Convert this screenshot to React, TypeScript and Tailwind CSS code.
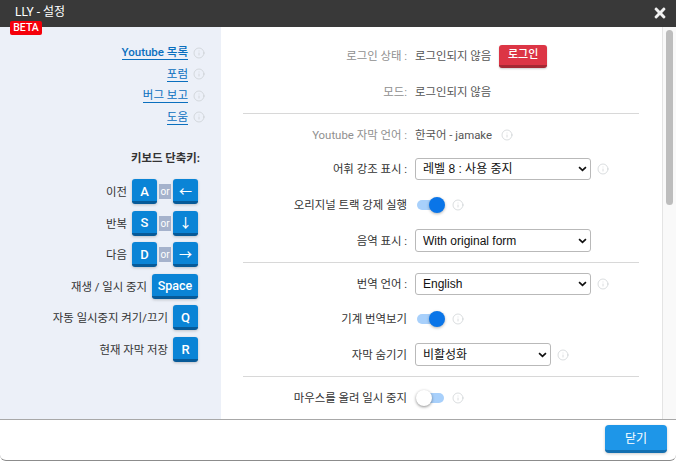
import { Info } from "lucide-react";
import { FaTimes } from "react-icons/fa";

const font = "font-['Roboto','Noto_Sans_CJK_KR',sans-serif]";

const sideLinks = ["Youtube 목록", "포럼", "버그 보고", "도움"];

function InfoIcon({ className = "" }: { className?: string }) {
  return <Info size={12} strokeWidth={1.25} className={`shrink-0 text-[#c4c8cc] ${className}`} />;
}

function Key({ label, wide = false }: { label: string; wide?: boolean }) {
  return (
    <span
      className={`flex h-[25px] ${wide ? "w-[46px] text-[12.5px]" : "w-[25px] text-[13px]"} items-center justify-center rounded-[3px] border-b-[3px] border-[#075a98] bg-[#0a84d6] pt-[3px] font-medium text-white shadow-[0_1px_3px_rgba(0,0,0,0.2)]`}
    >
      {label}
    </span>
  );
}

function ShortcutRow({ label, keys }: { label: string; keys: string[] }) {
  return (
    <div className="flex h-[31.6px] items-start justify-end">
      <span className="mr-[5px] pt-[4px] text-[11.4px] leading-[18px] text-[#333]">{label}</span>
      {keys.length === 2 ? (
        <div className="flex items-start">
          <Key label={keys[0]} />
          <span className="mx-[2px] mt-[5px] flex h-[15px] w-[12px] items-center justify-center bg-[#a5b2cc] text-[10px] text-white">
            or
          </span>
          <Key label={keys[1]} />
        </div>
      ) : (
        <Key label={keys[0]} wide={keys[0] === "Space"} />
      )}
    </div>
  );
}

function Row({
  label,
  height,
  muted = false,
  children,
}: {
  label: string;
  height: string;
  muted?: boolean;
  children: React.ReactNode;
}) {
  return (
    <div className={`flex items-center ${height}`}>
      <div className={`w-[164px] whitespace-nowrap pt-[2px] text-right text-[11.4px] ${muted ? "text-[#8f8f8f]" : "text-[#333]"}`}>
        {label}
      </div>
      <div className="ml-[8px] flex items-center">{children}</div>
    </div>
  );
}

function Select({ value, width, height }: { value: string; width: string; height: string }) {
  return (
    <div className="relative flex items-center">
      <select
        defaultValue={value}
        className={`${width} ${height} appearance-none rounded-[3px] border border-[#b9b9b9] bg-white pl-[7px] font-['Liberation_Sans','Noto_Sans_CJK_KR',sans-serif] text-[12px] text-[#111] outline-none`}
      >
        <option>{value}</option>
      </select>
      <svg
        viewBox="0 0 10 7"
        className="pointer-events-none absolute right-[4px] top-1/2 h-[6px] w-[9px] -translate-y-1/2"
      >
        <path d="M1 1.2 L5 5 L9 1.2" fill="none" stroke="#111" strokeWidth="2" />
      </svg>
    </div>
  );
}

function Toggle({ on }: { on: boolean }) {
  return (
    <span className="relative ml-[2px] block h-[10px] w-[27px] rounded-full bg-[#a8d0fb]">
      {on ? (
        <span className="absolute right-[-1px] top-[-3px] h-[16px] w-[16px] rounded-full bg-[#0a75e8] shadow-[0_1px_3px_rgba(0,0,0,0.3)]" />
      ) : (
        <span className="absolute left-[-1px] top-[-3px] h-[16px] w-[16px] rounded-full bg-white shadow-[0_1px_3px_rgba(0,0,0,0.45)]" />
      )}
    </span>
  );
}

export default function App() {
  return (
    <div className={`flex h-[461px] w-[676px] flex-col overflow-hidden rounded-b-[6px] border-b border-[#8c8c8c] bg-white ${font}`}>
      {/* title bar */}
      <div className="relative flex h-[27px] shrink-0 items-start justify-between bg-[#393939] pl-[15px] pr-[8px]">
        <span className="pt-[4px] text-[12px] leading-[16px] text-white">LLY - 설정</span>
        <FaTimes className="mt-[5px] text-[#f2f2f2]" size={16} />
        <span className="absolute left-[10px] top-[21px] z-10 flex h-[14px] w-[32px] items-center justify-center rounded-[2px] bg-[#f5000a] text-[10.5px] font-medium text-white">
          BETA
        </span>
      </div>

      <div className="flex min-h-0 flex-1">
        {/* sidebar */}
        <div className="w-[221px] shrink-0 bg-[#ecf0f8] pr-[23px] pt-[15px]">
          <div className="mr-[-7px] flex flex-col items-end">
            {sideLinks.map((link, i) => (
              <div key={link} className="flex h-[21.5px] items-center">
                <a className={`border-b border-[#0a6fbe] text-[11.5px] leading-[14px] text-[#0a6fbe] ${i === 0 ? "font-medium" : ""}`}>
                  {link}
                </a>
                <InfoIcon className="ml-[5px]" />
              </div>
            ))}
          </div>
          <div className="mr-[-2px] mt-[21px] text-right text-[11.4px] leading-[18px] font-bold text-[#333]">
            키보드 단축키:
          </div>
          <div className="mt-[12px]">
            <ShortcutRow label="이전" keys={["A", "←"]} />
            <ShortcutRow label="반복" keys={["S", "↓"]} />
            <ShortcutRow label="다음" keys={["D", "→"]} />
            <ShortcutRow label="재생 / 일시 중지" keys={["Space"]} />
            <ShortcutRow label="자동 일시중지 켜기/끄기" keys={["Q"]} />
            <ShortcutRow label="현재 자막 저장" keys={["R"]} />
          </div>
        </div>

        {/* settings */}
        <div className="min-w-0 flex-1 overflow-hidden pl-[22px] pr-[23px] pt-[11px]">
          <Row label="로그인 상태 :" height="h-[36px]" muted>
            <span className="pt-[2px] text-[11.4px] text-[#555]">로그인되지 않음</span>
            <button className="ml-[8px] h-[23px] w-[48px] rounded-[3px] border-b-[3px] border-[#a52833] bg-[#dc3545] text-[11px] leading-none font-medium text-white shadow-[0_1px_2px_rgba(0,0,0,0.2)]">
              로그인
            </button>
          </Row>
          <Row label="모드:" height="h-[35px]" muted>
            <span className="pt-[2px] text-[11.4px] text-[#555]">로그인되지 않음</span>
          </Row>
          <div className="mt-[4px] border-t border-[#d8d8d8]" />
          <div className="mt-[4px]">
            <Row label="Youtube 자막 언어 :" height="h-[34px]" muted>
              <span className="pt-[2px] text-[11.4px] text-[#555]">한국어 - jamake</span>
              <InfoIcon className="ml-[9px]" />
            </Row>
          </div>
          <Row label="어휘 강조 표시 :" height="h-[34px]">
            <Select value="레벨 8 : 사용 중지" width="w-[176px]" height="h-[22px]" />
            <InfoIcon className="ml-[6px]" />
          </Row>
          <Row label="오리지널 트랙 강제 실행" height="h-[37px]">
            <Toggle on />
            <InfoIcon className="ml-[8px]" />
          </Row>
          <Row label="음역 표시 :" height="h-[35px]">
            <Select value="With original form" width="w-[176px]" height="h-[23px]" />
          </Row>
          <div className="mt-[4px] border-t border-[#d8d8d8]" />
          <div className="mt-[4px]">
            <Row label="번역 언어 :" height="h-[34px]">
              <Select value="English" width="w-[176px]" height="h-[22px]" />
              <InfoIcon className="ml-[6px]" />
            </Row>
          </div>
          <Row label="기계 번역보기" height="h-[36px]">
            <Toggle on />
            <InfoIcon className="ml-[8px]" />
          </Row>
          <Row label="자막 숨기기" height="h-[35px]">
            <Select value="비활성화" width="w-[136px]" height="h-[23px]" />
            <InfoIcon className="ml-[6px]" />
          </Row>
          <div className="mt-[4px] border-t border-[#d8d8d8]" />
          <Row label="마우스를 올려 일시 중지" height="h-[41px]">
            <Toggle on={false} />
            <InfoIcon className="ml-[8px]" />
          </Row>
        </div>

        {/* scrollbar */}
        <div className="w-[14px] shrink-0 border-l border-[#e4e4e4] bg-[#f9f9f9] pl-[3px] pt-[3px]">
          <div className="h-[175px] w-[7px] rounded-full bg-[#bdbdbd]" />
        </div>
      </div>

      {/* footer */}
      <div className="flex h-[41px] shrink-0 items-start justify-end border-t border-[#a8a8a8] pr-[9px] pt-[5px]">
        <button className="h-[28px] w-[62px] rounded-[4px] border-b-[3px] border-[#146fb0] bg-[#1e96e8] pt-[2px] text-[12px] text-white shadow-[0_1px_3px_rgba(0,0,0,0.2)]">
          닫기
        </button>
      </div>
    </div>
  );
}
